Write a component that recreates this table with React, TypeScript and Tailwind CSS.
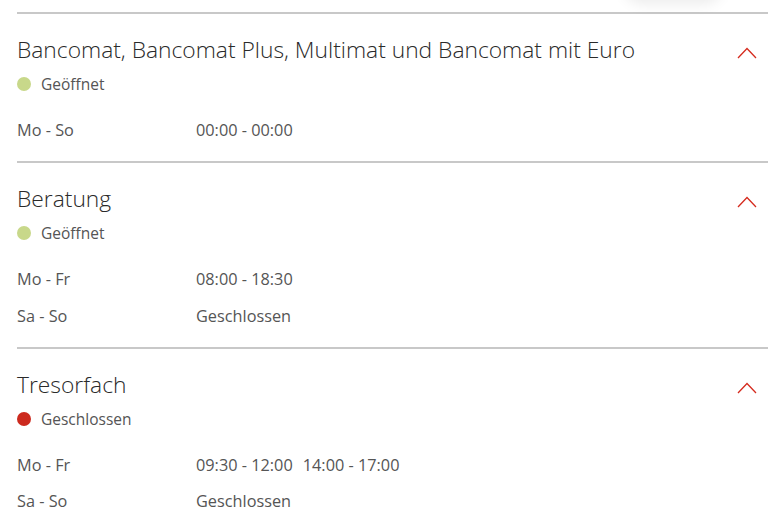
import React from "react";

type Row = { days: string; hours: string[] };
type Section = { title: string; open: boolean; rows: Row[] };

const sections: Section[] = [
  {
    title: "Bancomat, Bancomat Plus, Multimat und Bancomat mit Euro",
    open: true,
    rows: [{ days: "Mo - So", hours: ["00:00 - 00:00"] }],
  },
  {
    title: "Beratung",
    open: true,
    rows: [
      { days: "Mo - Fr", hours: ["08:00 - 18:30"] },
      { days: "Sa - So", hours: ["Geschlossen"] },
    ],
  },
  {
    title: "Tresorfach",
    open: false,
    rows: [
      { days: "Mo - Fr", hours: ["09:30 - 12:00", "14:00 - 17:00"] },
      { days: "Sa - So", hours: ["Geschlossen"] },
    ],
  },
];

function Chevron() {
  return (
    <svg width="20" height="12" viewBox="0 0 20 12" fill="none" className="mt-[6px]">
      <path d="M1 11 L10 1.5 L19 11" stroke="#d52b1e" strokeWidth="1.3" />
    </svg>
  );
}

export default function App() {
  return (
    <div
      className="relative w-[768px] h-[513px] overflow-hidden bg-white pt-[12px] pl-[17px] text-[#333333]"
      style={{ fontFamily: "'Open Sans', sans-serif" }}
    >
      <div className="absolute right-[45px] top-[-40px] h-[40px] w-[100px] rounded-full shadow-[0_4px_14px_rgba(0,0,0,0.08)]" />
      {sections.map((s) => (
        <div key={s.title} className="border-t-2 border-[#c8c8c8] pt-[21px] pb-[21px]">
          <div className="flex items-center justify-between pr-[11px]">
            <div className="text-[22.8px] font-light leading-[30px] text-[#2a2a2a]">{s.title}</div>
            <Chevron />
          </div>
          <div className="mt-[9px] flex items-center gap-[10px] text-[15.5px] leading-[20px] text-[#555555]">
            <span
              className={
                "h-[14px] w-[14px] rounded-full " +
                (s.open ? "bg-[#c8d88a]" : "bg-[#cc2a1e]")
              }
            />
            <span>{s.open ? "Geöffnet" : "Geschlossen"}</span>
          </div>
          <div className="mt-[26px] flex flex-col gap-[16.5px] text-[16.3px] leading-[20px] text-[#555555]">
            {s.rows.map((r) => (
              <div key={r.days} className="flex">
                <div className="w-[179px]">{r.days}</div>
                <div className="flex gap-[10px]">
                  {r.hours.map((h) => (
                    <span key={h}>{h}</span>
                  ))}
                </div>
              </div>
            ))}
          </div>
        </div>
      ))}
    </div>
  );
}
